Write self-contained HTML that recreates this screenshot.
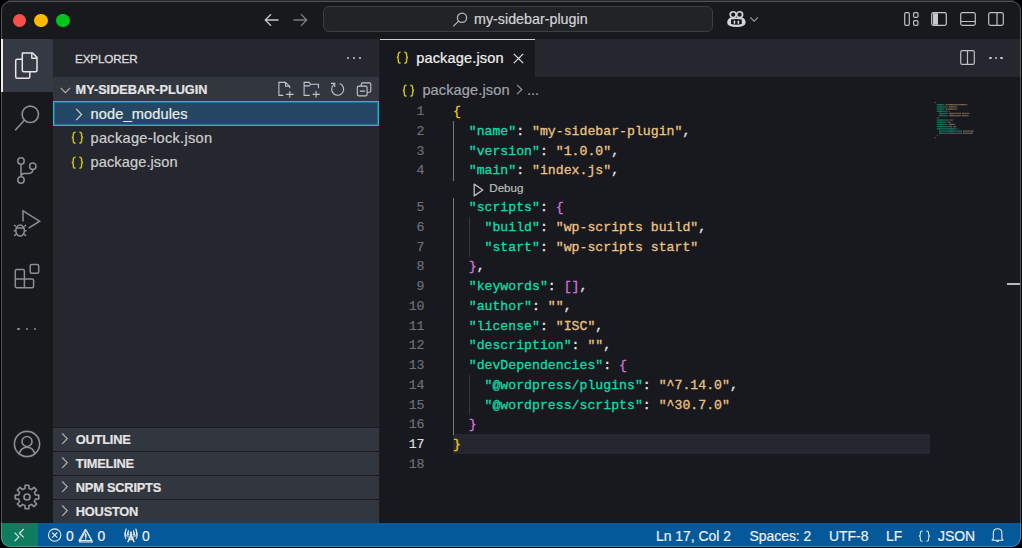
<!DOCTYPE html>
<html><head><meta charset="utf-8">
<style>
*{margin:0;padding:0;box-sizing:border-box}
html,body{width:1022px;height:548px;background:#000;overflow:hidden}
body{font-family:"Liberation Sans",sans-serif;color:#ccc;position:relative}
.abs{position:absolute}
#win{position:absolute;left:1px;top:1px;width:1020px;height:546px;border-radius:9.5px;overflow:hidden;background:#18191d}
#winin{position:absolute;left:-1px;top:-1px;width:1022px;height:548px}
#winborder{position:absolute;left:1px;top:1px;width:1020px;height:546px;border-radius:9.5px;border:1px solid rgba(255,255,255,0.25);pointer-events:none}
#topstrip{position:absolute;left:8px;top:0;width:1006px;height:1px;background:#2a2a2c}
#title{left:0;top:0;width:1022px;height:38.5px;background:#18191d}
.tl{position:absolute;width:13.5px;height:13.5px;border-radius:50%;top:13.6px}
#act{left:0;top:38.5px;width:53px;height:484.5px;background:#18191d}
#side{left:53px;top:38.5px;width:326px;height:484.5px;background:#24272e}
#sideborder{left:379px;top:38.5px;width:1px;height:484.5px;background:#1b1c20}
#editor{left:380px;top:38.5px;width:642px;height:484.5px;background:#17191e}
#tabs{left:380px;top:38.5px;width:642px;height:38.7px;background:#24272e}
#tab{left:380px;top:38.5px;width:155px;height:38.7px;background:#17191e;border-top:1px solid #d0d0d0}
#status{left:0;top:523px;width:1022px;height:25px;background:#04599a}
#remote{left:0;top:523px;width:38px;height:25px;background:#0f7c5f}
.ui{font-family:"Liberation Sans",sans-serif;white-space:pre;position:absolute;-webkit-text-stroke:0.2px}
.code{font-family:"Liberation Mono",monospace;font-size:13.2px;line-height:19.75px;white-space:pre;position:absolute;left:452.9px;color:#e6e6e6;-webkit-text-stroke:0.3px}
.ln{font-family:"Liberation Mono",monospace;font-size:13.2px;line-height:19.75px;white-space:pre;position:absolute;left:380px;width:44.5px;text-align:right;color:#6c6f76;-webkit-text-stroke:0.2px}
.k{color:#10dcaa}.s{color:#ebc283}.b1{color:#f1c40f}.b2{color:#d672d6}
.guide{position:absolute;width:1px;background:#75787f}
.guide2{position:absolute;width:1px;background:#35383e}
.hdr{position:absolute;left:53px;width:326px;height:24px;background:#31363f;border-top:1px solid #1b1c20}
svg{position:absolute;overflow:visible}
</style></head><body>
<svg width="0" height="0" style="position:absolute"><defs><symbol id="br" viewBox="0 0 13 13"><path d="M4.6 1.1Q2.3 1.1 2.3 3.3V5.1Q2.3 6.5 0.8 6.5Q2.3 6.5 2.3 7.9V9.9Q2.3 12.1 4.6 12.1M8.3 1.1Q10.6 1.1 10.6 3.3V5.1Q10.6 6.5 12.1 6.5Q10.6 6.5 10.6 7.9V9.9Q10.6 12.1 8.3 12.1" fill="none" stroke="#cdc61a" stroke-width="1.4"/></symbol></defs></svg>
<div id="topstrip"></div><div id="win"><div id="winin">
  <div id="title" class="abs"></div>
  <div class="tl" style="left:12.5px;background:#fa4f4a"></div>
  <div class="tl" style="left:34.4px;background:#fdba00"></div>
  <div class="tl" style="left:56.4px;background:#03c61c"></div>

  <!-- nav arrows -->
  <svg style="left:264px;top:13px" width="16" height="14" viewBox="0 0 16 14"><path d="M14.5 7H1.5M7 1.2L1.3 7L7 12.8" fill="none" stroke="#c8c8c8" stroke-width="1.3"/></svg>
  <svg style="left:292px;top:13px" width="16" height="14" viewBox="0 0 16 14"><path d="M1.5 7H14.5M9 1.2L14.7 7L9 12.8" fill="none" stroke="#7a7b7e" stroke-width="1.3"/></svg>

  <!-- search box -->
  <div class="abs" style="left:323.4px;top:6px;width:389.6px;height:26px;border:1px solid #3d3e43;border-radius:6px;background:#222327"></div>
  <svg style="left:452px;top:12px" width="16" height="15" viewBox="0 0 16 15"><circle cx="10" cy="5.8" r="4.6" fill="none" stroke="#b5b5b5" stroke-width="1.3"/><path d="M6.7 9.1L1.2 14.4" stroke="#b5b5b5" stroke-width="1.3"/></svg>
  <div class="ui" style="left:474px;top:10.2px;font-size:14.3px;line-height:18px;color:#d4d4d4">my-sidebar-plugin</div>

  <!-- copilot -->
  <svg style="left:0;top:0" width="800" height="40" viewBox="0 0 800 40">
   <path d="M727.2 22.6Q727.2 18.6 730.8 17.4H742.2Q745.6 18.6 745.6 22.6Q745.6 27 736.4 27Q727.2 27 727.2 22.6Z" fill="#d6d6d6"/>
   <circle cx="733.1" cy="14.6" r="3.7" fill="#d6d6d6"/><circle cx="739.7" cy="14.6" r="3.7" fill="#d6d6d6"/>
   <circle cx="733.2" cy="14.7" r="2.1" fill="#18191d"/><circle cx="739.6" cy="14.7" r="2.1" fill="#18191d"/>
   <path d="M731 19.6Q736.4 18.4 741.8 19.6V24Q736.4 25.4 731 24Z" fill="#18191d"/>
   <rect x="733.7" y="20.4" width="1.5" height="3.6" rx="0.75" fill="#d6d6d6"/><rect x="737.6" y="20.4" width="1.5" height="3.6" rx="0.75" fill="#d6d6d6"/>
   <path d="M750.3 17.3L754.1 21.1L757.9 17.3" fill="none" stroke="#a0a0a0" stroke-width="1.1"/>
  </svg>

  <!-- layout icons -->
  <svg style="left:903.5px;top:12px" width="15" height="14" viewBox="0 0 15 14"><rect x="0.7" y="0.7" width="4.6" height="12.6" rx="1.3" fill="none" stroke="#c0c0c0" stroke-width="1.2"/><rect x="9.6" y="0.7" width="4.4" height="4.6" rx="1.1" fill="none" stroke="#c0c0c0" stroke-width="1.2"/><rect x="9.6" y="8.7" width="4.4" height="4.6" rx="1.1" fill="none" stroke="#c0c0c0" stroke-width="1.2"/></svg>
  <svg style="left:931px;top:12px" width="16" height="14" viewBox="0 0 16 14"><rect x="0.7" y="0.7" width="14.6" height="12.6" rx="1.8" fill="none" stroke="#c8c8c8" stroke-width="1.2"/><path d="M2 1.3H7V12.7H2Z" fill="#c8c8c8"/></svg>
  <svg style="left:959.5px;top:12px" width="16" height="14" viewBox="0 0 16 14"><rect x="0.7" y="0.7" width="14.6" height="12.6" rx="1.8" fill="none" stroke="#c0c0c0" stroke-width="1.2"/><path d="M0.7 9.5H15.3" stroke="#c0c0c0" stroke-width="1.2"/></svg>
  <svg style="left:988px;top:12px" width="16" height="14" viewBox="0 0 16 14"><rect x="0.7" y="0.7" width="14.6" height="12.6" rx="1.8" fill="none" stroke="#c0c0c0" stroke-width="1.2"/><path d="M9 0.7V13.3" stroke="#c0c0c0" stroke-width="1.2"/></svg>

  <!-- activity bar -->
  <div id="act" class="abs"></div>
  <div class="abs" style="left:0;top:38.5px;width:53px;height:53.5px;background:#343944"></div>
  <div class="abs" style="left:1px;top:38.5px;width:2px;height:53.5px;background:#e8e8e8"></div>
  <!-- explorer icon -->
  <svg style="left:14.3px;top:52px" width="24" height="27" viewBox="0 0 24 27"><path d="M8.3 1H18.6L23 5.4V18.2Q23 19.7 21.5 19.7H9.8Q8.3 19.7 8.3 18.2V2.5Q8.3 1 9.8 1Z" fill="none" stroke="#e6e6e6" stroke-width="1.5" stroke-linejoin="round"/><path d="M17.8 1V6.2H23" fill="none" stroke="#e6e6e6" stroke-width="1.4" stroke-linejoin="round"/><path d="M8.3 7.3H3.2Q1.7 7.3 1.7 8.8V24.8Q1.7 26.3 3.2 26.3H14.3Q15.8 26.3 15.8 24.8V19.7" fill="none" stroke="#e6e6e6" stroke-width="1.5" stroke-linejoin="round"/></svg>
  <!-- search icon -->
  <svg style="left:14px;top:105px" width="26" height="27" viewBox="0 0 26 27"><circle cx="16.3" cy="9.3" r="8.2" fill="none" stroke="#8b8e95" stroke-width="1.6"/><path d="M10.4 15.2L1.2 25.2" stroke="#8b8e95" stroke-width="1.6"/></svg>
  <!-- source control -->
  <svg style="left:16px;top:157px" width="22" height="27" viewBox="0 0 22 27"><circle cx="5" cy="4" r="3.2" fill="none" stroke="#8b8e95" stroke-width="1.5"/><circle cx="16.8" cy="9.3" r="3.2" fill="none" stroke="#8b8e95" stroke-width="1.5"/><circle cx="5" cy="23" r="3.2" fill="none" stroke="#8b8e95" stroke-width="1.5"/><path d="M5 7.2V19.8M16.8 12.5Q16.8 16.5 12 16.5H8.5Q5 16.5 5 19.8" fill="none" stroke="#8b8e95" stroke-width="1.5"/></svg>
  <!-- run and debug + extensions -->
  <svg style="left:0;top:0" width="100" height="548" viewBox="0 0 100 548"><g fill="none" stroke="#8b8e95" stroke-width="1.5">
   <path d="M23 221.6V210.8L39.6 221.2L28.6 228.2" stroke-linejoin="miter"/>
   <ellipse cx="20.1" cy="230.6" rx="4.3" ry="5.5"/>
   <path d="M15.8 228H24.4M15.9 226.6L14.1 224.9M15.8 230.8H13.6M16.1 234L14.2 236M24.3 226.6L26.1 224.9M24.4 230.8H26.6M24.1 234L26 236" stroke-width="1.4"/>
   <path d="M16.8 269.5H22.9Q24.4 269.5 24.4 271V279H32.1Q33.6 279 33.6 280.5V286.3Q33.6 287.8 32.1 287.8H16.8Q15.3 287.8 15.3 286.3V271Q15.3 269.5 16.8 269.5ZM15.3 279H24.4V287.8"/>
   <rect x="30.2" y="264.4" width="8.5" height="8.8" rx="1.5"/>
  </g></svg>
  <!-- more -->
  <div class="abs" style="left:17.4px;top:327.8px;width:2.6px;height:2.6px;border-radius:50%;background:#8b8e95"></div>
  <div class="abs" style="left:25.5px;top:327.8px;width:2.6px;height:2.6px;border-radius:50%;background:#8b8e95"></div>
  <div class="abs" style="left:33.6px;top:327.8px;width:2.6px;height:2.6px;border-radius:50%;background:#8b8e95"></div>
  <!-- account -->
  <svg style="left:13px;top:430px" width="28" height="28" viewBox="0 0 28 28"><circle cx="14" cy="14" r="12.6" fill="none" stroke="#8b8e95" stroke-width="1.6"/><circle cx="14" cy="11.5" r="5" fill="none" stroke="#8b8e95" stroke-width="1.6"/><path d="M6.2 23.8Q8 17.2 14 17.2Q20 17.2 21.8 23.8" fill="none" stroke="#8b8e95" stroke-width="1.6"/></svg>
  <!-- gear -->
  <svg style="left:12.8px;top:482.6px" width="28" height="28" viewBox="0 0 28 28"><path d="M11.97 5.54 L12.14 2.25 L15.86 2.25 L16.03 5.54 L18.55 6.58 L20.99 4.37 L23.63 7.01 L21.42 9.45 L22.46 11.97 L25.75 12.14 L25.75 15.86 L22.46 16.03 L21.42 18.55 L23.63 20.99 L20.99 23.63 L18.55 21.42 L16.03 22.46 L15.86 25.75 L12.14 25.75 L11.97 22.46 L9.45 21.42 L7.01 23.63 L4.37 20.99 L6.58 18.55 L5.54 16.03 L2.25 15.86 L2.25 12.14 L5.54 11.97 L6.58 9.45 L4.37 7.01 L7.01 4.37 L9.45 6.58Z" fill="none" stroke="#8b8e95" stroke-width="1.7" stroke-linejoin="round"/><circle cx="14" cy="14" r="3" fill="none" stroke="#8b8e95" stroke-width="1.7"/></svg>

  <!-- sidebar -->
  <div id="side" class="abs"></div>
  <div class="ui" style="left:75px;top:51.9px;font-size:11.7px;line-height:14px;color:#dadada;letter-spacing:-0.15px;-webkit-text-stroke:0.35px">EXPLORER</div>
  <div class="abs" style="left:347.1px;top:56.9px;width:2.3px;height:2.3px;border-radius:50%;background:#c8c8c8"></div>
  <div class="abs" style="left:352.9px;top:56.9px;width:2.3px;height:2.3px;border-radius:50%;background:#c8c8c8"></div>
  <div class="abs" style="left:358.6px;top:56.9px;width:2.3px;height:2.3px;border-radius:50%;background:#c8c8c8"></div>
  <div class="abs" style="left:53px;top:77px;width:326px;height:24.6px;background:#31363f"></div>
  <svg style="left:59.5px;top:86.5px" width="12" height="8" viewBox="0 0 12 8"><path d="M0.7 0.8L5.4 5.6L10.1 0.8" fill="none" stroke="#b0b0b0" stroke-width="1.2"/></svg>
  <div class="ui" style="left:75.6px;top:83px;font-size:12.7px;line-height:15px;font-weight:bold;color:#e4e4e4">MY-SIDEBAR-PLUGIN</div>

  <div class="abs" style="left:53px;top:101.3px;width:326px;height:24.3px;background:#244863;border:1px solid #18bad6;box-shadow:inset 0 0 0 1px rgba(24,186,214,0.4)"></div>
  <svg style="left:75px;top:107.7px" width="8" height="13" viewBox="0 0 8 13"><path d="M1.2 0.8L6.6 6.5L1.2 12.2" fill="none" stroke="#d0d0d0" stroke-width="1.2"/></svg>
  <div class="ui" style="left:90.5px;top:105.7px;font-size:14.6px;line-height:17px;color:#ececec;letter-spacing:0.12px">node_modules</div>
  <svg style="left:70.5px;top:131.2px" width="13" height="13" viewBox="0 0 13 13"><use href="#br"/></svg>
  <div class="ui" style="left:90.5px;top:129.5px;font-size:14.6px;line-height:17px;color:#cfcfcf;letter-spacing:0.3px">package-lock.json</div>
  <svg style="left:70.5px;top:156px" width="13" height="13" viewBox="0 0 13 13"><use href="#br"/></svg>
  <div class="ui" style="left:90.5px;top:153.5px;font-size:14.6px;line-height:17px;color:#cfcfcf;letter-spacing:0.1px">package.json</div>

  <div class="hdr" style="top:427px"></div>
  <div class="hdr" style="top:451px"></div>
  <div class="hdr" style="top:475px"></div>
  <div class="hdr" style="top:499px"></div>
  <svg style="left:61px;top:432px" width="8" height="13" viewBox="0 0 8 13"><path d="M1.2 1.5L6.2 6.7L1.2 11.9" fill="none" stroke="#b0b0b0" stroke-width="1.2"/></svg>
  <div class="ui" style="left:75.8px;top:432px;font-size:12.8px;line-height:15px;font-weight:bold;color:#e4e4e4;letter-spacing:-0.2px">OUTLINE</div>
  <svg style="left:61px;top:456px" width="8" height="13" viewBox="0 0 8 13"><path d="M1.2 1.5L6.2 6.7L1.2 11.9" fill="none" stroke="#b0b0b0" stroke-width="1.2"/></svg>
  <div class="ui" style="left:75.8px;top:456px;font-size:12.8px;line-height:15px;font-weight:bold;color:#e4e4e4;letter-spacing:-0.2px">TIMELINE</div>
  <svg style="left:61px;top:480px" width="8" height="13" viewBox="0 0 8 13"><path d="M1.2 1.5L6.2 6.7L1.2 11.9" fill="none" stroke="#b0b0b0" stroke-width="1.2"/></svg>
  <div class="ui" style="left:75.8px;top:480px;font-size:12.8px;line-height:15px;font-weight:bold;color:#e4e4e4;letter-spacing:-0.2px">NPM SCRIPTS</div>
  <svg style="left:61px;top:504px" width="8" height="13" viewBox="0 0 8 13"><path d="M1.2 1.5L6.2 6.7L1.2 11.9" fill="none" stroke="#b0b0b0" stroke-width="1.2"/></svg>
  <div class="ui" style="left:75.8px;top:504px;font-size:12.8px;line-height:15px;font-weight:bold;color:#e4e4e4;letter-spacing:-0.2px">HOUSTON</div>
  <svg style="left:0;top:0" width="1022" height="548" viewBox="0 0 1022 548">
   <g fill="none" stroke="#c5c5c5" stroke-width="1.1">
    <path d="M283.3 95.4H278.9V82.4H285.5L289.7 86.6V88.3M285.5 82.4V86.2H289.7"/>
    <path d="M286.2 94.4H293.6M289.8 91V97.8"/>
    <path d="M309.7 95.4H304.1V82.4H309L310.6 84.3H318.5V88.3M304.1 85.9H309L310.6 84.3"/>
    <path d="M312.6 94.4H319.7M316.1 91V97.8"/>
    <path d="M339.7 83.6A6 6 0 1 1 334 84.5"/>
    <path d="M331 83.4H334.8V87"/>
    <path d="M361.2 86.1V84.4Q361.2 82.9 362.7 82.9H369.3Q370.8 82.9 370.8 84.4V90.7Q370.8 92.2 369.3 92.2H367.1"/>
    <rect x="357.3" y="86.1" width="9.8" height="9.8" rx="1.5"/>
    <path d="M359.8 91.1H365.1"/>
   </g>
  </svg>
  <div id="sideborder" class="abs"></div>

  <!-- editor -->
  <div id="editor" class="abs"></div>
  <div id="tabs" class="abs"></div>
  <div id="tab" class="abs"></div>
  <svg style="left:395.5px;top:51px" width="13" height="13" viewBox="0 0 13 13"><use href="#br"/></svg>
  <div class="ui" style="left:416.2px;top:49.5px;font-size:14.6px;line-height:17px;color:#f0f0f0;letter-spacing:0.12px">package.json</div>
  <svg style="left:513px;top:53px" width="11" height="11" viewBox="0 0 11 11"><path d="M0.8 0.8L10.2 10.2M10.2 0.8L0.8 10.2" stroke="#e0e0e0" stroke-width="1.2"/></svg>
  <!-- split + more -->
  <svg style="left:960px;top:50px" width="15" height="15" viewBox="0 0 15 15"><rect x="0.7" y="0.7" width="13.6" height="13.6" rx="1.6" fill="none" stroke="#c0c0c0" stroke-width="1.2"/><path d="M7.5 0.7V14.3" stroke="#c0c0c0" stroke-width="1.2"/></svg>
  <div class="abs" style="left:989.4px;top:57px;width:2.3px;height:2.3px;border-radius:50%;background:#c8c8c8"></div>
  <div class="abs" style="left:994.9px;top:57px;width:2.3px;height:2.3px;border-radius:50%;background:#c8c8c8"></div>
  <div class="abs" style="left:1000.4px;top:57px;width:2.3px;height:2.3px;border-radius:50%;background:#c8c8c8"></div>
  <!-- breadcrumbs -->
  <svg style="left:402px;top:83.5px" width="13" height="13" viewBox="0 0 13 13"><use href="#br"/></svg>
  <div class="ui" style="left:422.4px;top:82px;font-size:14.6px;line-height:17px;color:#a2a4aa;letter-spacing:0.1px">package.json</div>
  <svg style="left:515.5px;top:84px" width="7" height="11" viewBox="0 0 7 11"><path d="M1 0.8L5.8 5.5L1 10.2" fill="none" stroke="#9a9ca2" stroke-width="1.1"/></svg>
  <div class="ui" style="left:527px;top:82px;font-size:14.6px;line-height:17px;color:#9a9ca2">...</div>

  <!-- line highlight -->
  <div class="abs" style="left:452.9px;top:434.2px;width:477px;height:19.8px;background:#24272e"></div>
  <!-- guides -->
  <div class="guide" style="left:453px;top:121.25px;height:59.25px"></div>
  <div class="guide" style="left:453px;top:197.5px;height:237px"></div>
  <div class="guide2" style="left:469px;top:217.25px;height:39.5px"></div>
  <div class="guide2" style="left:469px;top:375.25px;height:39.5px"></div>

  <!-- line numbers -->
  <div class="ln" style="top:102.2px">1
2
3
4</div>
  <div class="ln" style="top:198.2px">5
6
7
8
9
10
11
12
13
14
15
16
<span style="color:#dcdcdc">17</span>
18</div>
  <!-- code -->
  <div class="code" style="top:102.2px"><span class="b1">{</span>
  <span class="k">"name"</span>: <span class="s">"my-sidebar-plugin"</span>,
  <span class="k">"version"</span>: <span class="s">"1.0.0"</span>,
  <span class="k">"main"</span>: <span class="s">"index.js"</span>,</div>
  <svg style="left:472.5px;top:183px" width="11" height="14" viewBox="0 0 11 14"><path d="M1.2 1.1L9.8 7L1.2 12.9Z" fill="none" stroke="#c0c0c0" stroke-width="1.3" stroke-linejoin="round"/></svg>
  <div class="ui" style="left:489.3px;top:180.8px;font-size:11.6px;line-height:14px;color:#bdbdbd">Debug</div>
  <div class="code" style="top:198.2px">  <span class="k">"scripts"</span>: <span class="b2">{</span>
    <span class="k">"build"</span>: <span class="s">"wp-scripts build"</span>,
    <span class="k">"start"</span>: <span class="s">"wp-scripts start"</span>
  <span class="b2">}</span>,
  <span class="k">"keywords"</span>: <span class="b2">[]</span>,
  <span class="k">"author"</span>: <span class="s">""</span>,
  <span class="k">"license"</span>: <span class="s">"ISC"</span>,
  <span class="k">"description"</span>: <span class="s">""</span>,
  <span class="k">"devDependencies"</span>: <span class="b2">{</span>
    <span class="k">"@wordpress/plugins"</span>: <span class="s">"^7.14.0"</span>,
    <span class="k">"@wordpress/scripts"</span>: <span class="s">"^30.7.0"</span>
  <span class="b2">}</span>
<span class="b1">}</span>
</div>
  <!-- minimap -->
<svg style="left:0;top:0" width="1022" height="548" viewBox="0 0 1022 548"><rect x="934.60" y="101.80" width="0.85" height="1.3" fill="rgba(241,196,15,0.55)"/>
<rect x="936.80" y="104.00" width="0.85" height="1.3" fill="rgba(20,216,168,0.6)"/>
<rect x="937.90" y="104.00" width="0.85" height="1.3" fill="rgba(20,216,168,0.6)"/>
<rect x="939.00" y="104.00" width="0.85" height="1.3" fill="rgba(20,216,168,0.6)"/>
<rect x="940.10" y="104.00" width="0.85" height="1.3" fill="rgba(20,216,168,0.6)"/>
<rect x="941.20" y="104.00" width="0.85" height="1.3" fill="rgba(20,216,168,0.6)"/>
<rect x="942.30" y="104.00" width="0.85" height="1.3" fill="rgba(20,216,168,0.6)"/>
<rect x="943.40" y="104.00" width="0.85" height="1.3" fill="rgba(200,200,200,0.4)"/>
<rect x="945.60" y="104.00" width="0.85" height="1.3" fill="rgba(229,191,133,0.55)"/>
<rect x="946.70" y="104.00" width="0.85" height="1.3" fill="rgba(229,191,133,0.55)"/>
<rect x="947.80" y="104.00" width="0.85" height="1.3" fill="rgba(229,191,133,0.55)"/>
<rect x="948.90" y="104.00" width="0.85" height="1.3" fill="rgba(229,191,133,0.55)"/>
<rect x="950.00" y="104.00" width="0.85" height="1.3" fill="rgba(229,191,133,0.55)"/>
<rect x="951.10" y="104.00" width="0.85" height="1.3" fill="rgba(229,191,133,0.55)"/>
<rect x="952.20" y="104.00" width="0.85" height="1.3" fill="rgba(229,191,133,0.55)"/>
<rect x="953.30" y="104.00" width="0.85" height="1.3" fill="rgba(229,191,133,0.55)"/>
<rect x="954.40" y="104.00" width="0.85" height="1.3" fill="rgba(229,191,133,0.55)"/>
<rect x="955.50" y="104.00" width="0.85" height="1.3" fill="rgba(229,191,133,0.55)"/>
<rect x="956.60" y="104.00" width="0.85" height="1.3" fill="rgba(229,191,133,0.55)"/>
<rect x="957.70" y="104.00" width="0.85" height="1.3" fill="rgba(229,191,133,0.55)"/>
<rect x="958.80" y="104.00" width="0.85" height="1.3" fill="rgba(229,191,133,0.55)"/>
<rect x="959.90" y="104.00" width="0.85" height="1.3" fill="rgba(229,191,133,0.55)"/>
<rect x="961.00" y="104.00" width="0.85" height="1.3" fill="rgba(229,191,133,0.55)"/>
<rect x="962.10" y="104.00" width="0.85" height="1.3" fill="rgba(229,191,133,0.55)"/>
<rect x="963.20" y="104.00" width="0.85" height="1.3" fill="rgba(229,191,133,0.55)"/>
<rect x="964.30" y="104.00" width="0.85" height="1.3" fill="rgba(229,191,133,0.55)"/>
<rect x="965.40" y="104.00" width="0.85" height="1.3" fill="rgba(229,191,133,0.55)"/>
<rect x="966.50" y="104.00" width="0.85" height="1.3" fill="rgba(200,200,200,0.4)"/>
<rect x="936.80" y="106.20" width="0.85" height="1.3" fill="rgba(20,216,168,0.6)"/>
<rect x="937.90" y="106.20" width="0.85" height="1.3" fill="rgba(20,216,168,0.6)"/>
<rect x="939.00" y="106.20" width="0.85" height="1.3" fill="rgba(20,216,168,0.6)"/>
<rect x="940.10" y="106.20" width="0.85" height="1.3" fill="rgba(20,216,168,0.6)"/>
<rect x="941.20" y="106.20" width="0.85" height="1.3" fill="rgba(20,216,168,0.6)"/>
<rect x="942.30" y="106.20" width="0.85" height="1.3" fill="rgba(20,216,168,0.6)"/>
<rect x="943.40" y="106.20" width="0.85" height="1.3" fill="rgba(20,216,168,0.6)"/>
<rect x="944.50" y="106.20" width="0.85" height="1.3" fill="rgba(20,216,168,0.6)"/>
<rect x="945.60" y="106.20" width="0.85" height="1.3" fill="rgba(20,216,168,0.6)"/>
<rect x="946.70" y="106.20" width="0.85" height="1.3" fill="rgba(200,200,200,0.4)"/>
<rect x="948.90" y="106.20" width="0.85" height="1.3" fill="rgba(229,191,133,0.55)"/>
<rect x="950.00" y="106.20" width="0.85" height="1.3" fill="rgba(229,191,133,0.55)"/>
<rect x="951.10" y="106.20" width="0.85" height="1.3" fill="rgba(229,191,133,0.55)"/>
<rect x="952.20" y="106.20" width="0.85" height="1.3" fill="rgba(229,191,133,0.55)"/>
<rect x="953.30" y="106.20" width="0.85" height="1.3" fill="rgba(229,191,133,0.55)"/>
<rect x="954.40" y="106.20" width="0.85" height="1.3" fill="rgba(229,191,133,0.55)"/>
<rect x="955.50" y="106.20" width="0.85" height="1.3" fill="rgba(229,191,133,0.55)"/>
<rect x="956.60" y="106.20" width="0.85" height="1.3" fill="rgba(200,200,200,0.4)"/>
<rect x="936.80" y="108.40" width="0.85" height="1.3" fill="rgba(20,216,168,0.6)"/>
<rect x="937.90" y="108.40" width="0.85" height="1.3" fill="rgba(20,216,168,0.6)"/>
<rect x="939.00" y="108.40" width="0.85" height="1.3" fill="rgba(20,216,168,0.6)"/>
<rect x="940.10" y="108.40" width="0.85" height="1.3" fill="rgba(20,216,168,0.6)"/>
<rect x="941.20" y="108.40" width="0.85" height="1.3" fill="rgba(20,216,168,0.6)"/>
<rect x="942.30" y="108.40" width="0.85" height="1.3" fill="rgba(20,216,168,0.6)"/>
<rect x="943.40" y="108.40" width="0.85" height="1.3" fill="rgba(200,200,200,0.4)"/>
<rect x="945.60" y="108.40" width="0.85" height="1.3" fill="rgba(229,191,133,0.55)"/>
<rect x="946.70" y="108.40" width="0.85" height="1.3" fill="rgba(229,191,133,0.55)"/>
<rect x="947.80" y="108.40" width="0.85" height="1.3" fill="rgba(229,191,133,0.55)"/>
<rect x="948.90" y="108.40" width="0.85" height="1.3" fill="rgba(229,191,133,0.55)"/>
<rect x="950.00" y="108.40" width="0.85" height="1.3" fill="rgba(229,191,133,0.55)"/>
<rect x="951.10" y="108.40" width="0.85" height="1.3" fill="rgba(229,191,133,0.55)"/>
<rect x="952.20" y="108.40" width="0.85" height="1.3" fill="rgba(229,191,133,0.55)"/>
<rect x="953.30" y="108.40" width="0.85" height="1.3" fill="rgba(229,191,133,0.55)"/>
<rect x="954.40" y="108.40" width="0.85" height="1.3" fill="rgba(229,191,133,0.55)"/>
<rect x="955.50" y="108.40" width="0.85" height="1.3" fill="rgba(229,191,133,0.55)"/>
<rect x="956.60" y="108.40" width="0.85" height="1.3" fill="rgba(200,200,200,0.4)"/>
<rect x="936.80" y="110.60" width="0.85" height="1.3" fill="rgba(20,216,168,0.6)"/>
<rect x="937.90" y="110.60" width="0.85" height="1.3" fill="rgba(20,216,168,0.6)"/>
<rect x="939.00" y="110.60" width="0.85" height="1.3" fill="rgba(20,216,168,0.6)"/>
<rect x="940.10" y="110.60" width="0.85" height="1.3" fill="rgba(20,216,168,0.6)"/>
<rect x="941.20" y="110.60" width="0.85" height="1.3" fill="rgba(20,216,168,0.6)"/>
<rect x="942.30" y="110.60" width="0.85" height="1.3" fill="rgba(20,216,168,0.6)"/>
<rect x="943.40" y="110.60" width="0.85" height="1.3" fill="rgba(20,216,168,0.6)"/>
<rect x="944.50" y="110.60" width="0.85" height="1.3" fill="rgba(20,216,168,0.6)"/>
<rect x="945.60" y="110.60" width="0.85" height="1.3" fill="rgba(20,216,168,0.6)"/>
<rect x="946.70" y="110.60" width="0.85" height="1.3" fill="rgba(200,200,200,0.4)"/>
<rect x="948.90" y="110.60" width="0.85" height="1.3" fill="rgba(214,114,214,0.55)"/>
<rect x="939.00" y="112.80" width="0.85" height="1.3" fill="rgba(20,216,168,0.6)"/>
<rect x="940.10" y="112.80" width="0.85" height="1.3" fill="rgba(20,216,168,0.6)"/>
<rect x="941.20" y="112.80" width="0.85" height="1.3" fill="rgba(20,216,168,0.6)"/>
<rect x="942.30" y="112.80" width="0.85" height="1.3" fill="rgba(20,216,168,0.6)"/>
<rect x="943.40" y="112.80" width="0.85" height="1.3" fill="rgba(20,216,168,0.6)"/>
<rect x="944.50" y="112.80" width="0.85" height="1.3" fill="rgba(20,216,168,0.6)"/>
<rect x="945.60" y="112.80" width="0.85" height="1.3" fill="rgba(20,216,168,0.6)"/>
<rect x="946.70" y="112.80" width="0.85" height="1.3" fill="rgba(200,200,200,0.4)"/>
<rect x="948.90" y="112.80" width="0.85" height="1.3" fill="rgba(229,191,133,0.55)"/>
<rect x="950.00" y="112.80" width="0.85" height="1.3" fill="rgba(229,191,133,0.55)"/>
<rect x="951.10" y="112.80" width="0.85" height="1.3" fill="rgba(229,191,133,0.55)"/>
<rect x="952.20" y="112.80" width="0.85" height="1.3" fill="rgba(229,191,133,0.55)"/>
<rect x="953.30" y="112.80" width="0.85" height="1.3" fill="rgba(229,191,133,0.55)"/>
<rect x="954.40" y="112.80" width="0.85" height="1.3" fill="rgba(229,191,133,0.55)"/>
<rect x="955.50" y="112.80" width="0.85" height="1.3" fill="rgba(229,191,133,0.55)"/>
<rect x="956.60" y="112.80" width="0.85" height="1.3" fill="rgba(229,191,133,0.55)"/>
<rect x="957.70" y="112.80" width="0.85" height="1.3" fill="rgba(229,191,133,0.55)"/>
<rect x="958.80" y="112.80" width="0.85" height="1.3" fill="rgba(229,191,133,0.55)"/>
<rect x="959.90" y="112.80" width="0.85" height="1.3" fill="rgba(229,191,133,0.55)"/>
<rect x="962.10" y="112.80" width="0.85" height="1.3" fill="rgba(229,191,133,0.55)"/>
<rect x="963.20" y="112.80" width="0.85" height="1.3" fill="rgba(229,191,133,0.55)"/>
<rect x="964.30" y="112.80" width="0.85" height="1.3" fill="rgba(229,191,133,0.55)"/>
<rect x="965.40" y="112.80" width="0.85" height="1.3" fill="rgba(229,191,133,0.55)"/>
<rect x="966.50" y="112.80" width="0.85" height="1.3" fill="rgba(229,191,133,0.55)"/>
<rect x="967.60" y="112.80" width="0.85" height="1.3" fill="rgba(229,191,133,0.55)"/>
<rect x="968.70" y="112.80" width="0.85" height="1.3" fill="rgba(200,200,200,0.4)"/>
<rect x="939.00" y="115.00" width="0.85" height="1.3" fill="rgba(20,216,168,0.6)"/>
<rect x="940.10" y="115.00" width="0.85" height="1.3" fill="rgba(20,216,168,0.6)"/>
<rect x="941.20" y="115.00" width="0.85" height="1.3" fill="rgba(20,216,168,0.6)"/>
<rect x="942.30" y="115.00" width="0.85" height="1.3" fill="rgba(20,216,168,0.6)"/>
<rect x="943.40" y="115.00" width="0.85" height="1.3" fill="rgba(20,216,168,0.6)"/>
<rect x="944.50" y="115.00" width="0.85" height="1.3" fill="rgba(20,216,168,0.6)"/>
<rect x="945.60" y="115.00" width="0.85" height="1.3" fill="rgba(20,216,168,0.6)"/>
<rect x="946.70" y="115.00" width="0.85" height="1.3" fill="rgba(200,200,200,0.4)"/>
<rect x="948.90" y="115.00" width="0.85" height="1.3" fill="rgba(229,191,133,0.55)"/>
<rect x="950.00" y="115.00" width="0.85" height="1.3" fill="rgba(229,191,133,0.55)"/>
<rect x="951.10" y="115.00" width="0.85" height="1.3" fill="rgba(229,191,133,0.55)"/>
<rect x="952.20" y="115.00" width="0.85" height="1.3" fill="rgba(229,191,133,0.55)"/>
<rect x="953.30" y="115.00" width="0.85" height="1.3" fill="rgba(229,191,133,0.55)"/>
<rect x="954.40" y="115.00" width="0.85" height="1.3" fill="rgba(229,191,133,0.55)"/>
<rect x="955.50" y="115.00" width="0.85" height="1.3" fill="rgba(229,191,133,0.55)"/>
<rect x="956.60" y="115.00" width="0.85" height="1.3" fill="rgba(229,191,133,0.55)"/>
<rect x="957.70" y="115.00" width="0.85" height="1.3" fill="rgba(229,191,133,0.55)"/>
<rect x="958.80" y="115.00" width="0.85" height="1.3" fill="rgba(229,191,133,0.55)"/>
<rect x="959.90" y="115.00" width="0.85" height="1.3" fill="rgba(229,191,133,0.55)"/>
<rect x="962.10" y="115.00" width="0.85" height="1.3" fill="rgba(229,191,133,0.55)"/>
<rect x="963.20" y="115.00" width="0.85" height="1.3" fill="rgba(229,191,133,0.55)"/>
<rect x="964.30" y="115.00" width="0.85" height="1.3" fill="rgba(229,191,133,0.55)"/>
<rect x="965.40" y="115.00" width="0.85" height="1.3" fill="rgba(229,191,133,0.55)"/>
<rect x="966.50" y="115.00" width="0.85" height="1.3" fill="rgba(229,191,133,0.55)"/>
<rect x="967.60" y="115.00" width="0.85" height="1.3" fill="rgba(229,191,133,0.55)"/>
<rect x="936.80" y="117.20" width="0.85" height="1.3" fill="rgba(214,114,214,0.55)"/>
<rect x="937.90" y="117.20" width="0.85" height="1.3" fill="rgba(200,200,200,0.4)"/>
<rect x="936.80" y="119.40" width="0.85" height="1.3" fill="rgba(20,216,168,0.6)"/>
<rect x="937.90" y="119.40" width="0.85" height="1.3" fill="rgba(20,216,168,0.6)"/>
<rect x="939.00" y="119.40" width="0.85" height="1.3" fill="rgba(20,216,168,0.6)"/>
<rect x="940.10" y="119.40" width="0.85" height="1.3" fill="rgba(20,216,168,0.6)"/>
<rect x="941.20" y="119.40" width="0.85" height="1.3" fill="rgba(20,216,168,0.6)"/>
<rect x="942.30" y="119.40" width="0.85" height="1.3" fill="rgba(20,216,168,0.6)"/>
<rect x="943.40" y="119.40" width="0.85" height="1.3" fill="rgba(20,216,168,0.6)"/>
<rect x="944.50" y="119.40" width="0.85" height="1.3" fill="rgba(20,216,168,0.6)"/>
<rect x="945.60" y="119.40" width="0.85" height="1.3" fill="rgba(20,216,168,0.6)"/>
<rect x="946.70" y="119.40" width="0.85" height="1.3" fill="rgba(20,216,168,0.6)"/>
<rect x="947.80" y="119.40" width="0.85" height="1.3" fill="rgba(200,200,200,0.4)"/>
<rect x="950.00" y="119.40" width="0.85" height="1.3" fill="rgba(214,114,214,0.55)"/>
<rect x="951.10" y="119.40" width="0.85" height="1.3" fill="rgba(214,114,214,0.55)"/>
<rect x="952.20" y="119.40" width="0.85" height="1.3" fill="rgba(200,200,200,0.4)"/>
<rect x="936.80" y="121.60" width="0.85" height="1.3" fill="rgba(20,216,168,0.6)"/>
<rect x="937.90" y="121.60" width="0.85" height="1.3" fill="rgba(20,216,168,0.6)"/>
<rect x="939.00" y="121.60" width="0.85" height="1.3" fill="rgba(20,216,168,0.6)"/>
<rect x="940.10" y="121.60" width="0.85" height="1.3" fill="rgba(20,216,168,0.6)"/>
<rect x="941.20" y="121.60" width="0.85" height="1.3" fill="rgba(20,216,168,0.6)"/>
<rect x="942.30" y="121.60" width="0.85" height="1.3" fill="rgba(20,216,168,0.6)"/>
<rect x="943.40" y="121.60" width="0.85" height="1.3" fill="rgba(20,216,168,0.6)"/>
<rect x="944.50" y="121.60" width="0.85" height="1.3" fill="rgba(20,216,168,0.6)"/>
<rect x="945.60" y="121.60" width="0.85" height="1.3" fill="rgba(200,200,200,0.4)"/>
<rect x="947.80" y="121.60" width="0.85" height="1.3" fill="rgba(229,191,133,0.55)"/>
<rect x="948.90" y="121.60" width="0.85" height="1.3" fill="rgba(229,191,133,0.55)"/>
<rect x="950.00" y="121.60" width="0.85" height="1.3" fill="rgba(200,200,200,0.4)"/>
<rect x="936.80" y="123.80" width="0.85" height="1.3" fill="rgba(20,216,168,0.6)"/>
<rect x="937.90" y="123.80" width="0.85" height="1.3" fill="rgba(20,216,168,0.6)"/>
<rect x="939.00" y="123.80" width="0.85" height="1.3" fill="rgba(20,216,168,0.6)"/>
<rect x="940.10" y="123.80" width="0.85" height="1.3" fill="rgba(20,216,168,0.6)"/>
<rect x="941.20" y="123.80" width="0.85" height="1.3" fill="rgba(20,216,168,0.6)"/>
<rect x="942.30" y="123.80" width="0.85" height="1.3" fill="rgba(20,216,168,0.6)"/>
<rect x="943.40" y="123.80" width="0.85" height="1.3" fill="rgba(20,216,168,0.6)"/>
<rect x="944.50" y="123.80" width="0.85" height="1.3" fill="rgba(20,216,168,0.6)"/>
<rect x="945.60" y="123.80" width="0.85" height="1.3" fill="rgba(20,216,168,0.6)"/>
<rect x="946.70" y="123.80" width="0.85" height="1.3" fill="rgba(200,200,200,0.4)"/>
<rect x="948.90" y="123.80" width="0.85" height="1.3" fill="rgba(229,191,133,0.55)"/>
<rect x="950.00" y="123.80" width="0.85" height="1.3" fill="rgba(229,191,133,0.55)"/>
<rect x="951.10" y="123.80" width="0.85" height="1.3" fill="rgba(229,191,133,0.55)"/>
<rect x="952.20" y="123.80" width="0.85" height="1.3" fill="rgba(229,191,133,0.55)"/>
<rect x="953.30" y="123.80" width="0.85" height="1.3" fill="rgba(229,191,133,0.55)"/>
<rect x="954.40" y="123.80" width="0.85" height="1.3" fill="rgba(200,200,200,0.4)"/>
<rect x="936.80" y="126.00" width="0.85" height="1.3" fill="rgba(20,216,168,0.6)"/>
<rect x="937.90" y="126.00" width="0.85" height="1.3" fill="rgba(20,216,168,0.6)"/>
<rect x="939.00" y="126.00" width="0.85" height="1.3" fill="rgba(20,216,168,0.6)"/>
<rect x="940.10" y="126.00" width="0.85" height="1.3" fill="rgba(20,216,168,0.6)"/>
<rect x="941.20" y="126.00" width="0.85" height="1.3" fill="rgba(20,216,168,0.6)"/>
<rect x="942.30" y="126.00" width="0.85" height="1.3" fill="rgba(20,216,168,0.6)"/>
<rect x="943.40" y="126.00" width="0.85" height="1.3" fill="rgba(20,216,168,0.6)"/>
<rect x="944.50" y="126.00" width="0.85" height="1.3" fill="rgba(20,216,168,0.6)"/>
<rect x="945.60" y="126.00" width="0.85" height="1.3" fill="rgba(20,216,168,0.6)"/>
<rect x="946.70" y="126.00" width="0.85" height="1.3" fill="rgba(20,216,168,0.6)"/>
<rect x="947.80" y="126.00" width="0.85" height="1.3" fill="rgba(20,216,168,0.6)"/>
<rect x="948.90" y="126.00" width="0.85" height="1.3" fill="rgba(20,216,168,0.6)"/>
<rect x="950.00" y="126.00" width="0.85" height="1.3" fill="rgba(20,216,168,0.6)"/>
<rect x="951.10" y="126.00" width="0.85" height="1.3" fill="rgba(200,200,200,0.4)"/>
<rect x="953.30" y="126.00" width="0.85" height="1.3" fill="rgba(229,191,133,0.55)"/>
<rect x="954.40" y="126.00" width="0.85" height="1.3" fill="rgba(229,191,133,0.55)"/>
<rect x="955.50" y="126.00" width="0.85" height="1.3" fill="rgba(200,200,200,0.4)"/>
<rect x="936.80" y="128.20" width="0.85" height="1.3" fill="rgba(20,216,168,0.6)"/>
<rect x="937.90" y="128.20" width="0.85" height="1.3" fill="rgba(20,216,168,0.6)"/>
<rect x="939.00" y="128.20" width="0.85" height="1.3" fill="rgba(20,216,168,0.6)"/>
<rect x="940.10" y="128.20" width="0.85" height="1.3" fill="rgba(20,216,168,0.6)"/>
<rect x="941.20" y="128.20" width="0.85" height="1.3" fill="rgba(20,216,168,0.6)"/>
<rect x="942.30" y="128.20" width="0.85" height="1.3" fill="rgba(20,216,168,0.6)"/>
<rect x="943.40" y="128.20" width="0.85" height="1.3" fill="rgba(20,216,168,0.6)"/>
<rect x="944.50" y="128.20" width="0.85" height="1.3" fill="rgba(20,216,168,0.6)"/>
<rect x="945.60" y="128.20" width="0.85" height="1.3" fill="rgba(20,216,168,0.6)"/>
<rect x="946.70" y="128.20" width="0.85" height="1.3" fill="rgba(20,216,168,0.6)"/>
<rect x="947.80" y="128.20" width="0.85" height="1.3" fill="rgba(20,216,168,0.6)"/>
<rect x="948.90" y="128.20" width="0.85" height="1.3" fill="rgba(20,216,168,0.6)"/>
<rect x="950.00" y="128.20" width="0.85" height="1.3" fill="rgba(20,216,168,0.6)"/>
<rect x="951.10" y="128.20" width="0.85" height="1.3" fill="rgba(20,216,168,0.6)"/>
<rect x="952.20" y="128.20" width="0.85" height="1.3" fill="rgba(20,216,168,0.6)"/>
<rect x="953.30" y="128.20" width="0.85" height="1.3" fill="rgba(20,216,168,0.6)"/>
<rect x="954.40" y="128.20" width="0.85" height="1.3" fill="rgba(20,216,168,0.6)"/>
<rect x="955.50" y="128.20" width="0.85" height="1.3" fill="rgba(200,200,200,0.4)"/>
<rect x="957.70" y="128.20" width="0.85" height="1.3" fill="rgba(214,114,214,0.55)"/>
<rect x="939.00" y="130.40" width="0.85" height="1.3" fill="rgba(20,216,168,0.6)"/>
<rect x="940.10" y="130.40" width="0.85" height="1.3" fill="rgba(20,216,168,0.6)"/>
<rect x="941.20" y="130.40" width="0.85" height="1.3" fill="rgba(20,216,168,0.6)"/>
<rect x="942.30" y="130.40" width="0.85" height="1.3" fill="rgba(20,216,168,0.6)"/>
<rect x="943.40" y="130.40" width="0.85" height="1.3" fill="rgba(20,216,168,0.6)"/>
<rect x="944.50" y="130.40" width="0.85" height="1.3" fill="rgba(20,216,168,0.6)"/>
<rect x="945.60" y="130.40" width="0.85" height="1.3" fill="rgba(20,216,168,0.6)"/>
<rect x="946.70" y="130.40" width="0.85" height="1.3" fill="rgba(20,216,168,0.6)"/>
<rect x="947.80" y="130.40" width="0.85" height="1.3" fill="rgba(20,216,168,0.6)"/>
<rect x="948.90" y="130.40" width="0.85" height="1.3" fill="rgba(20,216,168,0.6)"/>
<rect x="950.00" y="130.40" width="0.85" height="1.3" fill="rgba(20,216,168,0.6)"/>
<rect x="951.10" y="130.40" width="0.85" height="1.3" fill="rgba(20,216,168,0.6)"/>
<rect x="952.20" y="130.40" width="0.85" height="1.3" fill="rgba(20,216,168,0.6)"/>
<rect x="953.30" y="130.40" width="0.85" height="1.3" fill="rgba(20,216,168,0.6)"/>
<rect x="954.40" y="130.40" width="0.85" height="1.3" fill="rgba(20,216,168,0.6)"/>
<rect x="955.50" y="130.40" width="0.85" height="1.3" fill="rgba(20,216,168,0.6)"/>
<rect x="956.60" y="130.40" width="0.85" height="1.3" fill="rgba(20,216,168,0.6)"/>
<rect x="957.70" y="130.40" width="0.85" height="1.3" fill="rgba(20,216,168,0.6)"/>
<rect x="958.80" y="130.40" width="0.85" height="1.3" fill="rgba(20,216,168,0.6)"/>
<rect x="959.90" y="130.40" width="0.85" height="1.3" fill="rgba(20,216,168,0.6)"/>
<rect x="961.00" y="130.40" width="0.85" height="1.3" fill="rgba(200,200,200,0.4)"/>
<rect x="963.20" y="130.40" width="0.85" height="1.3" fill="rgba(229,191,133,0.55)"/>
<rect x="964.30" y="130.40" width="0.85" height="1.3" fill="rgba(229,191,133,0.55)"/>
<rect x="965.40" y="130.40" width="0.85" height="1.3" fill="rgba(229,191,133,0.55)"/>
<rect x="966.50" y="130.40" width="0.85" height="1.3" fill="rgba(229,191,133,0.55)"/>
<rect x="967.60" y="130.40" width="0.85" height="1.3" fill="rgba(229,191,133,0.55)"/>
<rect x="968.70" y="130.40" width="0.85" height="1.3" fill="rgba(229,191,133,0.55)"/>
<rect x="969.80" y="130.40" width="0.85" height="1.3" fill="rgba(229,191,133,0.55)"/>
<rect x="970.90" y="130.40" width="0.85" height="1.3" fill="rgba(229,191,133,0.55)"/>
<rect x="972.00" y="130.40" width="0.85" height="1.3" fill="rgba(229,191,133,0.55)"/>
<rect x="973.10" y="130.40" width="0.85" height="1.3" fill="rgba(200,200,200,0.4)"/>
<rect x="939.00" y="132.60" width="0.85" height="1.3" fill="rgba(20,216,168,0.6)"/>
<rect x="940.10" y="132.60" width="0.85" height="1.3" fill="rgba(20,216,168,0.6)"/>
<rect x="941.20" y="132.60" width="0.85" height="1.3" fill="rgba(20,216,168,0.6)"/>
<rect x="942.30" y="132.60" width="0.85" height="1.3" fill="rgba(20,216,168,0.6)"/>
<rect x="943.40" y="132.60" width="0.85" height="1.3" fill="rgba(20,216,168,0.6)"/>
<rect x="944.50" y="132.60" width="0.85" height="1.3" fill="rgba(20,216,168,0.6)"/>
<rect x="945.60" y="132.60" width="0.85" height="1.3" fill="rgba(20,216,168,0.6)"/>
<rect x="946.70" y="132.60" width="0.85" height="1.3" fill="rgba(20,216,168,0.6)"/>
<rect x="947.80" y="132.60" width="0.85" height="1.3" fill="rgba(20,216,168,0.6)"/>
<rect x="948.90" y="132.60" width="0.85" height="1.3" fill="rgba(20,216,168,0.6)"/>
<rect x="950.00" y="132.60" width="0.85" height="1.3" fill="rgba(20,216,168,0.6)"/>
<rect x="951.10" y="132.60" width="0.85" height="1.3" fill="rgba(20,216,168,0.6)"/>
<rect x="952.20" y="132.60" width="0.85" height="1.3" fill="rgba(20,216,168,0.6)"/>
<rect x="953.30" y="132.60" width="0.85" height="1.3" fill="rgba(20,216,168,0.6)"/>
<rect x="954.40" y="132.60" width="0.85" height="1.3" fill="rgba(20,216,168,0.6)"/>
<rect x="955.50" y="132.60" width="0.85" height="1.3" fill="rgba(20,216,168,0.6)"/>
<rect x="956.60" y="132.60" width="0.85" height="1.3" fill="rgba(20,216,168,0.6)"/>
<rect x="957.70" y="132.60" width="0.85" height="1.3" fill="rgba(20,216,168,0.6)"/>
<rect x="958.80" y="132.60" width="0.85" height="1.3" fill="rgba(20,216,168,0.6)"/>
<rect x="959.90" y="132.60" width="0.85" height="1.3" fill="rgba(20,216,168,0.6)"/>
<rect x="961.00" y="132.60" width="0.85" height="1.3" fill="rgba(200,200,200,0.4)"/>
<rect x="963.20" y="132.60" width="0.85" height="1.3" fill="rgba(229,191,133,0.55)"/>
<rect x="964.30" y="132.60" width="0.85" height="1.3" fill="rgba(229,191,133,0.55)"/>
<rect x="965.40" y="132.60" width="0.85" height="1.3" fill="rgba(229,191,133,0.55)"/>
<rect x="966.50" y="132.60" width="0.85" height="1.3" fill="rgba(229,191,133,0.55)"/>
<rect x="967.60" y="132.60" width="0.85" height="1.3" fill="rgba(229,191,133,0.55)"/>
<rect x="968.70" y="132.60" width="0.85" height="1.3" fill="rgba(229,191,133,0.55)"/>
<rect x="969.80" y="132.60" width="0.85" height="1.3" fill="rgba(229,191,133,0.55)"/>
<rect x="970.90" y="132.60" width="0.85" height="1.3" fill="rgba(229,191,133,0.55)"/>
<rect x="972.00" y="132.60" width="0.85" height="1.3" fill="rgba(229,191,133,0.55)"/>
<rect x="936.80" y="134.80" width="0.85" height="1.3" fill="rgba(214,114,214,0.55)"/>
<rect x="934.60" y="137.00" width="0.85" height="1.3" fill="rgba(241,196,15,0.55)"/>
</svg>
  <!-- overview ruler cursor -->
  <div class="abs" style="left:1007px;top:282.5px;width:13px;height:2px;background:#b8b8b8"></div>

  <!-- status bar -->
  <div id="status" class="abs"></div>
  <div id="remote" class="abs"></div>
  <svg style="left:0;top:0" width="40" height="548" viewBox="0 0 40 548"><path d="M14.6 532.6L18.8 536.9L14.6 541.1M23.7 529L19.4 533.2L23.7 537.4" fill="none" stroke="#dde8e4" stroke-width="1.2"/></svg>
  <svg style="left:0;top:0" width="200" height="548" viewBox="0 0 200 548"><g fill="none" stroke="#e8e8e8" stroke-width="1.1">
   <circle cx="54.7" cy="535.1" r="6.2"/><path d="M52.1 532.5L57.3 537.7M57.3 532.5L52.1 537.7"/>
   <path d="M85.4 529.3L91.8 540.6H79L85.4 529.3Z" stroke-linejoin="round"/><path d="M85.4 533.2V537M85.4 538.3V539.4"/>
   <circle cx="131" cy="532.6" r="1.1" fill="#e8e8e8" stroke="none"/>
   <path d="M128.6 530.2Q127.4 532.6 128.6 535M133.4 530.2Q134.6 532.6 133.4 535M126.4 528.6Q124.3 532.6 126.4 536.6M135.6 528.6Q137.7 532.6 135.6 536.6M131 534L127.8 541.6M131 534L134.2 541.6M129 538.8H133"/>
  </g></svg>
  <div class="ui" style="left:66px;top:528px;font-size:13.9px;line-height:16px;color:#f0f0f0">0</div>
  <svg style="left:78.5px;top:528.5px" width="15" height="14" viewBox="0 0 15 14"><path d="M7 1L13.5 13H0.5Z" fill="none" stroke="#e8e8e8" stroke-width="1.2" stroke-linejoin="round"/><path d="M7 5V9.3M7 10.5V11.8" stroke="#e8e8e8" stroke-width="1.2"/></svg>
  <div class="ui" style="left:97.5px;top:528px;font-size:13.9px;line-height:16px;color:#f0f0f0">0</div>
  <svg style="left:124px;top:528.5px" width="14" height="14" viewBox="0 0 14 14"><circle cx="7" cy="5.5" r="1.3" fill="#e8e8e8"/><path d="M4.2 2.6Q2.8 5.5 4.2 8.4M9.8 2.6Q11.2 5.5 9.8 8.4M2 1Q-0.3 5.5 2 10M12 1Q14.3 5.5 12 10M7 6.8L3.8 13.2M7 6.8L10.2 13.2M5 10.8H9" fill="none" stroke="#e8e8e8" stroke-width="1.1"/></svg>
  <div class="ui" style="left:142px;top:528px;font-size:13.9px;line-height:16px;color:#f0f0f0">0</div>
  <div class="ui" style="left:656px;top:528px;font-size:13.9px;line-height:16px;color:#f0f0f0">Ln 17, Col 2</div>
  <div class="ui" style="left:749.5px;top:528px;font-size:13.9px;line-height:16px;color:#f0f0f0">Spaces: 2</div>
  <div class="ui" style="left:829px;top:528px;font-size:13.9px;line-height:16px;color:#f0f0f0">UTF-8</div>
  <div class="ui" style="left:886px;top:528px;font-size:13.9px;line-height:16px;color:#f0f0f0">LF</div>
  <svg style="left:918px;top:529.8px" width="13" height="12" viewBox="0 0 13 13" preserveAspectRatio="none"><path d="M4.6 1.1Q2.3 1.1 2.3 3.3V5.1Q2.3 6.5 0.8 6.5Q2.3 6.5 2.3 7.9V9.9Q2.3 12.1 4.6 12.1M8.3 1.1Q10.6 1.1 10.6 3.3V5.1Q10.6 6.5 12.1 6.5Q10.6 6.5 10.6 7.9V9.9Q10.6 12.1 8.3 12.1" fill="none" stroke="#e8e8e8" stroke-width="1.05"/></svg>
  <div class="ui" style="left:938px;top:528px;font-size:13.9px;line-height:16px;color:#f0f0f0">JSON</div>
  <svg style="left:0;top:0" width="1022" height="548" viewBox="0 0 1022 548"><path d="M993.3 538.9V533.6Q993.3 528.8 997.6 528.8Q1001.9 528.8 1001.9 533.6V538.9L1003.1 540.2H992.1L993.3 538.9Z" fill="none" stroke="#e8e8e8" stroke-width="1.1" stroke-linejoin="round"/><path d="M996.1 540.6Q997.6 542.5 999.1 540.6" fill="none" stroke="#e8e8e8" stroke-width="1.1"/></svg>
  
</div></div>
<div id="winborder"></div>
</body></html>
